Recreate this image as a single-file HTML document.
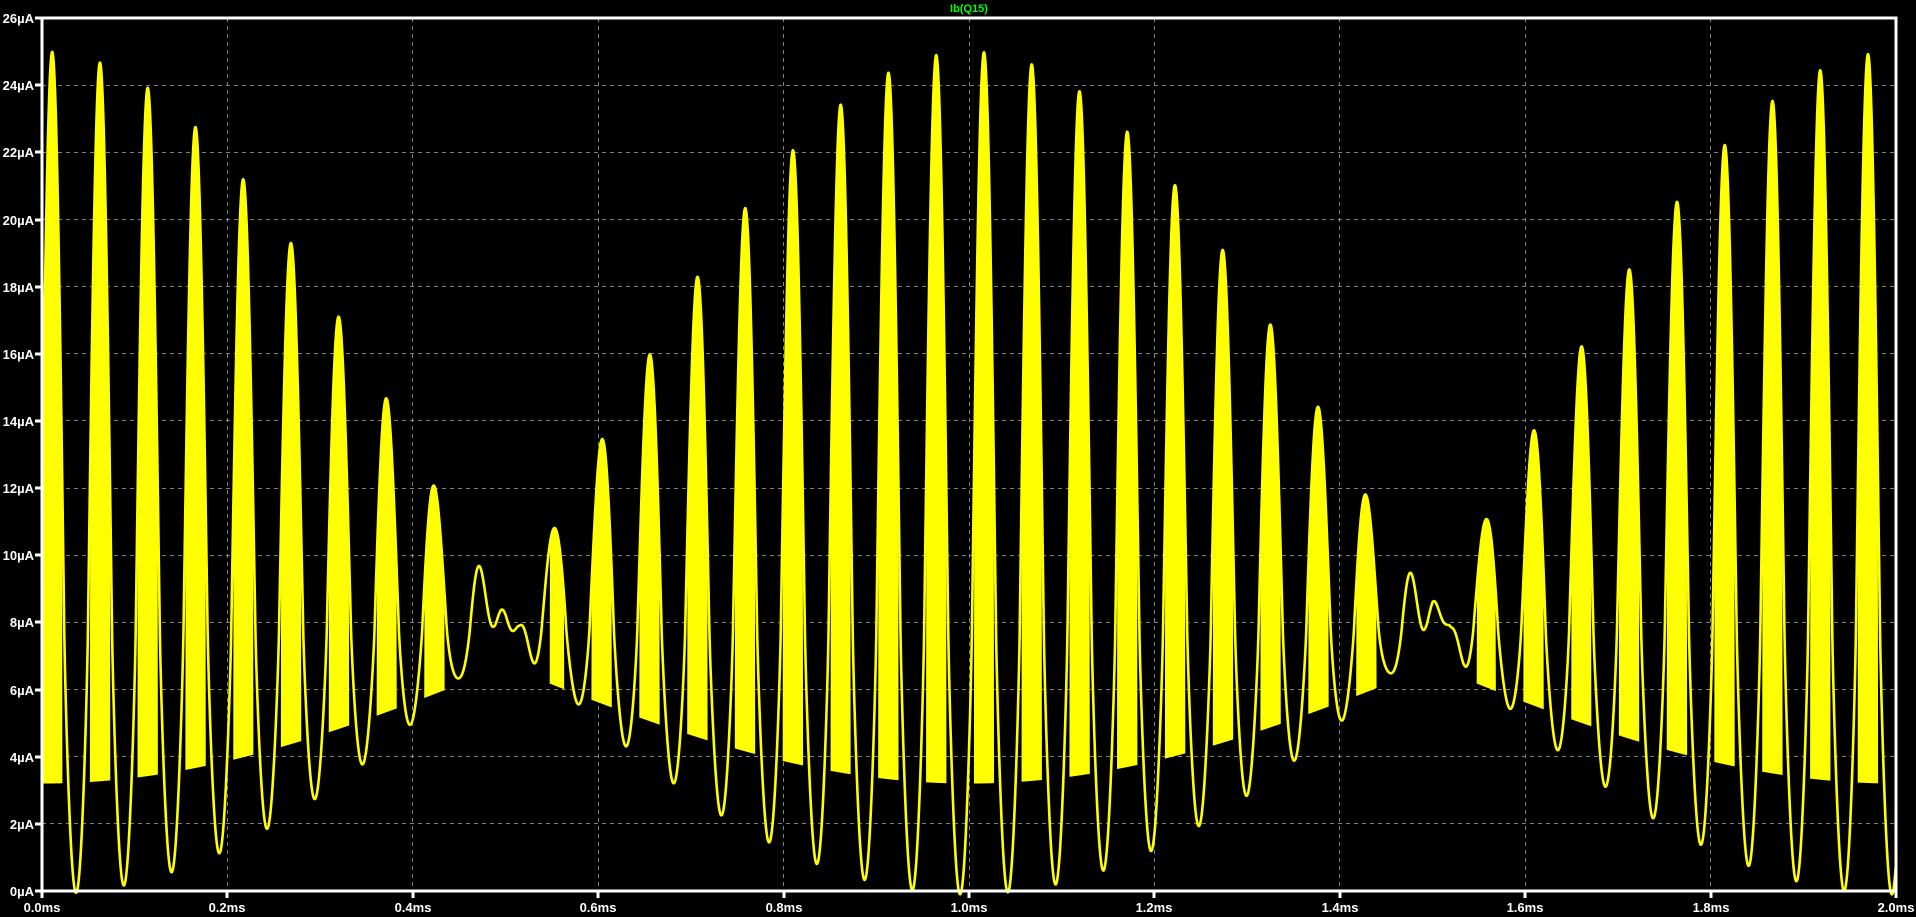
<!DOCTYPE html>
<html><head><meta charset="utf-8"><style>
html,body{margin:0;padding:0;background:#000;overflow:hidden;width:1916px;height:917px}
svg{display:block}
text{font-family:"Liberation Sans",sans-serif;font-weight:bold}
</style></head><body>
<svg id="s" width="1916" height="917" viewBox="0 0 1916 917" xmlns="http://www.w3.org/2000/svg">
<rect width="1916" height="917" fill="#000"/>
<g stroke="#808080" stroke-width="1" stroke-dasharray="4 4" fill="none">
<path d="M42 823.5H1896M42 756.5H1896M42 689.5H1896M42 622.5H1896M42 555.5H1896M42 488.5H1896M42 420.5H1896M42 353.5H1896M42 286.5H1896M42 219.5H1896M42 152.5H1896M42 85.5H1896"/>
<path d="M227.5 18V891M412.5 18V891M598.5 18V891M783.5 18V891M969.5 18V891M1154.5 18V891M1339.5 18V891M1525.5 18V891M1710.5 18V891"/>
</g>
<g id="wave"></g>
<rect x="42" y="18" width="1854" height="873" fill="none" stroke="#fff" stroke-width="3"/>
<g stroke="#fff" stroke-width="3">
<path d="M35 891H42M35 824H42M35 757H42M35 690H42M35 622H42M35 555H42M35 488H42M35 421H42M35 354H42M35 287H42M35 220H42M35 152H42M35 85H42M35 18H42"/>
<path d="M42 891V898M227 891V898M413 891V898M598 891V898M784 891V898M969 891V898M1154 891V898M1340 891V898M1525 891V898M1711 891V898M1896 891V898"/>
</g>
<g fill="#fff" font-size="13" text-anchor="end">
<text x="34" y="896">0µA</text><text x="34" y="829">2µA</text><text x="34" y="762">4µA</text>
<text x="34" y="695">6µA</text><text x="34" y="627">8µA</text><text x="34" y="560">10µA</text>
<text x="34" y="493">12µA</text><text x="34" y="426">14µA</text><text x="34" y="359">16µA</text>
<text x="34" y="292">18µA</text><text x="34" y="225">20µA</text><text x="34" y="157">22µA</text>
<text x="34" y="90">24µA</text><text x="34" y="23">26µA</text>
</g>
<g fill="#fff" font-size="13" text-anchor="middle">
<text x="42" y="912">0.0ms</text><text x="227" y="912">0.2ms</text><text x="413" y="912">0.4ms</text>
<text x="598" y="912">0.6ms</text><text x="784" y="912">0.8ms</text><text x="969" y="912">1.0ms</text>
<text x="1154" y="912">1.2ms</text><text x="1340" y="912">1.4ms</text><text x="1525" y="912">1.6ms</text>
<text x="1711" y="912">1.8ms</text><text x="1896" y="912">2.0ms</text>
</g>
<text x="969" y="12" fill="#00ff00" font-size="11" text-anchor="middle">Ib(Q15)</text>
</svg>
<script>
(function(){
var L=42,R=1896,T=18,B=891;
function X(t){return L+t*(R-L)/2;}
function Y(v){return B-v*(B-T)/26;}
var fc=19.4, ph=-2*Math.PI*fc*0.011;
function val(t){
  var E=Math.cos(Math.PI*t), a=Math.abs(E);
  var u=Math.cos(2*Math.PI*fc*t+ph)*(E>=0?1:-1);
  var P=8+17*a, Tr=8-8.1*Math.pow(a,0.85);
  var y;
  if(u>0) y=8+(P-8)*Math.pow(u,1.0); else y=8-(8-Tr)*Math.pow(-u,0.8);
  if(a<0.2) y+=0.6*Math.cos(4*Math.PI*fc*t+ph)*(1-a/0.2);
  return [y,a,u];
}
var N=6000, line=[], fillTop=[], fillBot=[];
for(var i=0;i<=N;i++){
  var t=2*i/N, r=val(t), x=X(t).toFixed(2);
  line.push(x+' '+Y(r[0]).toFixed(2));
  var F=3.2+3.5*(1-r[1]);
  var yy=r[0];
  if(r[1]<0.15||r[2]<0.25){yy=F;}
  if(yy<F) yy=F;
  fillTop.push(x+' '+Y(yy).toFixed(2));
  fillBot.push(x+' '+Y(F).toFixed(2));
}
fillBot.reverse();
var ns='http://www.w3.org/2000/svg';
var w=document.getElementById('wave');
var f=document.createElementNS(ns,'path');
f.setAttribute('d','M'+fillTop.join('L')+'L'+fillBot.join('L')+'Z');
f.setAttribute('fill','#ffff00');
w.appendChild(f);
var p=document.createElementNS(ns,'path');
p.setAttribute('d','M'+line.join('L'));
p.setAttribute('fill','none');p.setAttribute('stroke','#ffff00');
p.setAttribute('stroke-width','2.6');p.setAttribute('stroke-linejoin','round');
w.appendChild(p);
})();
</script>
</body></html>
